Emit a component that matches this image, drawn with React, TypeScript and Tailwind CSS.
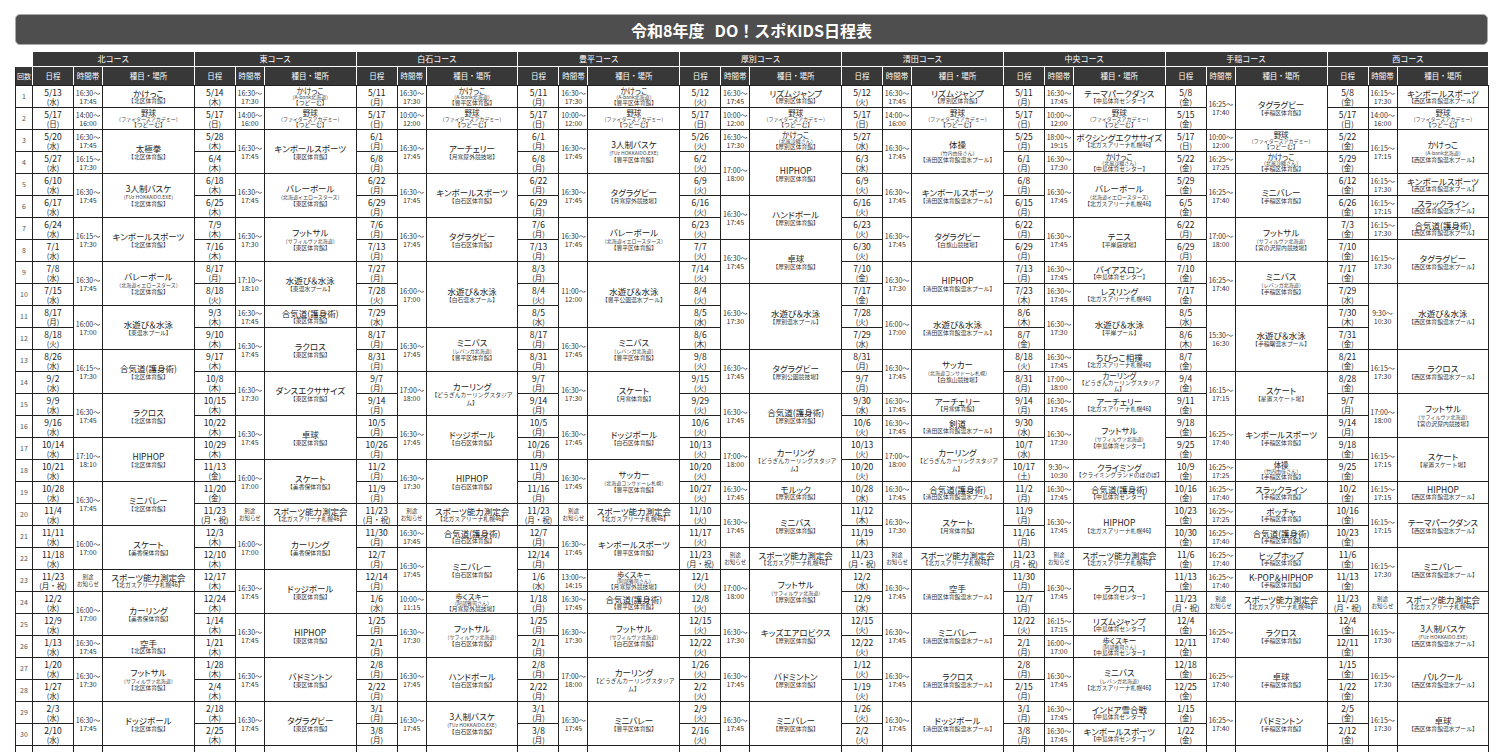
import React from "react";

type TimeBlock = { span: number; a: string; b: string; note?: boolean };
type EventBlock = { span: number; name: string; place: string; sub?: string };

const YAKYU = "野球|つどーむ|ファイターズアカデミー";
const SOKUTEI = "スポーツ能力測定会|北ガスアリーナ札幌46";

const RAW = [
  {
    name: "北コース",
    dates:
      "5/13水 5/17日 5/20水 5/27水 6/10水 6/17水 6/24水 7/1水 7/8水 7/15水 8/17月 8/18火 8/26水 9/2水 9/9水 9/16水 10/14水 10/21水 10/28水 11/4水 11/11水 11/18水 11/23月・祝 12/2水 12/9水 1/13水 1/20水 1/27水 2/3水 2/10水",
    times:
      "16:30-17:45 14:00-16:00 16:30-17:45 16:15-17:30 2*16:30-17:45 2*16:15-17:30 2*16:30-17:45 2*16:00-17:00 2*16:15-17:30 2*16:30-17:45 2*17:10-18:10 2*16:30-17:45 2*16:00-17:00 B 2*16:00-17:00 16:30-17:45 2*16:30-17:30 2*16:30-17:45",
    events: [
      "かけっこ|北区体育館",
      YAKYU,
      "2*太極拳|北区体育館",
      "2*3人制バスケ|北区体育館|FUz HOKKAIDO.EXE",
      "2*キンボールスポーツ|北区体育館",
      "2*バレーボール|北区体育館|北海道イエロースターズ",
      "2*水遊び＆水泳|東温水プール",
      "2*合気道(護身術)|北区体育館",
      "2*ラクロス|北区体育館",
      "2*HIPHOP|北区体育館",
      "2*ミニバレー|北区体育館",
      "2*スケート|美香保体育館",
      SOKUTEI,
      "2*カーリング|美香保体育館",
      "空手|北区体育館",
      "2*フットサル|北区体育館|サフィルヴァ北海道",
      "2*ドッジボール|北区体育館",
    ],
  },
  {
    name: "東コース",
    dates:
      "5/14木 5/17日 5/28木 6/4木 6/18木 6/25木 7/9木 7/16木 8/17月 8/18火 9/3木 9/10木 9/17木 10/8木 10/15木 10/22木 10/29木 11/13金 11/20金 11/23月・祝 12/3木 12/10木 12/17木 12/24木 1/14木 1/21木 1/28木 2/4木 2/18木 2/25木",
    times:
      "16:30-17:30 14:00-16:00 2*16:30-17:45 2*16:30-17:45 2*16:30-17:30 2*17:10-18:10 16:30-17:45 2*16:30-17:45 2*16:30-17:30 2*16:30-17:45 2*16:00-17:00 B 2*16:00-17:00 2*16:30-17:45 2*16:30-17:45 2*16:30-17:45 2*16:30-17:45",
    events: [
      "かけっこ|つどーむ|A-bank北海道",
      YAKYU,
      "2*キンボールスポーツ|東区体育館",
      "2*バレーボール|東区体育館|北海道イエロースターズ",
      "2*フットサル|東区体育館|サフィルヴァ北海道",
      "2*水遊び＆水泳|東温水プール",
      "合気道(護身術)|東区体育館",
      "2*ラクロス|東区体育館",
      "2*ダンスエクササイズ|東区体育館",
      "2*卓球|東区体育館",
      "2*スケート|美香保体育館",
      SOKUTEI,
      "2*カーリング|美香保体育館",
      "2*ドッジボール|東区体育館",
      "2*HIPHOP|東区体育館",
      "2*バドミントン|東区体育館",
      "2*タグラグビー|東区体育館",
    ],
  },
  {
    name: "白石コース",
    dates:
      "5/11月 5/17日 6/1月 6/8月 6/22月 6/29月 7/6月 7/13月 7/27月 7/28火 7/29水 8/17月 8/31月 9/7月 9/14月 10/5月 10/26月 11/2月 11/9月 11/23月・祝 11/30月 12/7月 12/14月 1/6水 1/25月 2/1月 2/8月 2/22月 3/1月 3/8月",
    times:
      "16:30-17:30 10:00-12:00 2*16:30-17:45 2*16:30-17:45 2*16:30-17:45 3*16:00-17:00 2*16:30-17:45 2*17:00-18:00 2*16:30-17:45 2*16:30-17:30 B 16:30-17:45 2*16:30-17:45 10:00-11:15 2*16:30-17:30 2*16:30-17:45 2*16:30-17:45",
    events: [
      "かけっこ|豊平区体育館|A-bank北海道",
      YAKYU,
      "2*アーチェリー|月寒屋外競技場",
      "2*キンボールスポーツ|白石区体育館",
      "2*タグラグビー|白石区体育館",
      "3*水遊び＆水泳|白石温水プール",
      "2*ミニバス|豊平区体育館|レバンガ北海道",
      "2*カーリング|どうぎんカーリングスタジアム",
      "2*ドッジボール|白石区体育館",
      "2*HIPHOP|白石区体育館",
      SOKUTEI,
      "合気道(護身術)|白石区体育館",
      "2*ミニバレー|白石区体育館",
      "歩くスキー|月寒屋外競技場|阿部雅司さん",
      "2*フットサル|白石区体育館|サフィルヴァ北海道",
      "2*ハンドボール|白石区体育館",
      "2*3人制バスケ|白石区体育館|FUz HOKKAIDO.EXE",
    ],
  },
  {
    name: "豊平コース",
    dates:
      "5/11月 5/17日 6/1月 6/8月 6/22月 6/29月 7/6月 7/13月 8/3月 8/4火 8/5水 8/17月 8/31月 9/7月 9/14月 10/5月 10/26月 11/9月 11/16月 11/23月・祝 12/7月 12/14月 1/6水 1/18月 1/25月 2/1月 2/8月 2/22月 3/1月 3/8月",
    times:
      "16:30-17:30 10:00-12:00 2*16:30-17:45 2*16:30-17:45 2*16:30-17:45 3*11:00-12:00 2*16:30-17:45 2*16:30-17:30 2*16:30-17:45 2*16:30-17:45 B 2*16:30-17:45 13:00-14:15 16:30-17:45 2*16:30-17:30 2*17:00-18:00 2*16:30-17:45",
    events: [
      "かけっこ|豊平区体育館|A-bank北海道",
      YAKYU,
      "2*3人制バスケ|豊平区体育館|FUz HOKKAIDO.EXE",
      "2*タグラグビー|月寒屋外競技場",
      "2*バレーボール|豊平区体育館|北海道イエロースターズ",
      "3*水遊び＆水泳|豊平公園温水プール",
      "2*ミニバス|豊平区体育館|レバンガ北海道",
      "2*スケート|月寒体育館",
      "2*ドッジボール|白石区体育館",
      "2*サッカー|豊平区体育館|北海道コンサドーレ札幌",
      SOKUTEI,
      "2*キンボールスポーツ|豊平区体育館",
      "歩くスキー|月寒屋外競技場|阿部雅司さん",
      "合気道(護身術)|豊平区体育館",
      "2*フットサル|白石区体育館|サフィルヴァ北海道",
      "2*カーリング|どうぎんカーリングスタジアム",
      "2*ミニバレー|豊平区体育館",
    ],
  },
  {
    name: "厚別コース",
    dates:
      "5/12火 5/17日 5/26火 6/2火 6/9火 6/16火 6/23火 7/7火 7/14火 8/4火 8/5水 8/6木 9/8火 9/15火 9/29火 10/6火 10/13火 10/20火 10/27火 11/10火 11/17火 11/23月・祝 12/1火 12/8火 12/15火 12/22火 1/26火 2/2火 2/9火 2/16火",
    times:
      "16:30-17:45 10:00-12:00 16:30-17:30 2*17:00-18:00 2*16:30-17:45 2*16:30-17:45 3*16:30-17:30 2*16:30-17:45 2*16:30-17:45 2*17:00-18:00 16:30-17:45 2*16:30-17:45 B 2*17:00-18:00 2*16:30-17:30 2*16:30-17:45 2*16:30-17:45",
    events: [
      "リズムジャンプ|厚別区体育館",
      YAKYU,
      "かけっこ|厚別区体育館|北風沙織さん",
      "2*HIPHOP|厚別区体育館",
      "2*ハンドボール|厚別区体育館",
      "2*卓球|厚別区体育館",
      "3*水遊び＆水泳|厚別温水プール",
      "2*タグラグビー|厚別公園競技場",
      "2*合気道(護身術)|厚別区体育館",
      "2*カーリング|どうぎんカーリングスタジアム",
      "モルック|厚別区体育館",
      "2*ミニバス|厚別区体育館",
      SOKUTEI,
      "2*フットサル|厚別区体育館|サフィルヴァ北海道",
      "2*キッズエアロビクス|厚別区体育館",
      "2*バドミントン|厚別区体育館",
      "2*ミニバレー|厚別区体育館",
    ],
  },
  {
    name: "清田コース",
    dates:
      "5/12火 5/17日 5/27水 6/3水 6/9火 6/16火 6/23火 6/30火 7/10金 7/17金 7/28火 7/29水 8/31月 9/7月 9/30水 10/6火 10/13火 10/20火 10/28水 11/12木 11/19木 11/23月・祝 12/2水 12/9水 12/15火 12/22火 1/12火 1/19火 1/26火 2/2火",
    times:
      "16:30-17:45 14:00-16:00 2*16:30-17:45 2*16:30-17:45 2*16:30-17:45 2*16:30-17:30 2*16:00-17:00 2*16:30-17:45 16:30-17:45 16:30-17:45 2*17:00-18:00 16:30-17:45 2*16:30-17:30 B 2*16:30-17:45 2*16:30-17:45 2*16:30-17:45 2*16:30-17:45",
    events: [
      "リズムジャンプ|厚別区体育館",
      YAKYU,
      "2*体操|清田区体育館温水プール|竹内由佳さん",
      "2*キンボールスポーツ|清田区体育館温水プール",
      "2*タグラグビー|白旗山競技場",
      "2*HIPHOP|清田区体育館温水プール",
      "2*水遊び＆水泳|清田区体育館温水プール",
      "2*サッカー|白旗山競技場|北海道コンサドーレ札幌",
      "アーチェリー|月寒体育館",
      "剣道|清田区体育館温水プール",
      "2*カーリング|どうぎんカーリングスタジアム",
      "合気道(護身術)|清田区体育館温水プール",
      "2*スケート|月寒体育館",
      SOKUTEI,
      "2*空手|清田区体育館温水プール",
      "2*ミニバレー|清田区体育館温水プール",
      "2*ラクロス|清田区体育館温水プール",
      "2*ドッジボール|清田区体育館温水プール",
    ],
  },
  {
    name: "中央コース",
    dates:
      "5/11月 5/17日 5/25月 6/1月 6/8月 6/15月 6/22月 6/29月 7/13月 7/23木 8/6木 8/7金 8/18火 8/31月 9/14月 9/30水 10/7水 10/17土 11/2月 11/9月 11/16月 11/23月・祝 11/30月 12/7月 12/22火 2/1月 2/8月 2/15月 3/1月 3/8月",
    times:
      "16:30-17:45 10:00-12:00 18:00-19:15 16:30-17:30 2*16:30-17:45 2*16:30-17:45 16:30-17:45 16:30-17:45 2*16:30-17:30 16:30-17:45 17:00-18:00 16:30-17:45 2*16:30-17:30 9:30-10:30 16:30-17:45 2*16:30-17:45 B 2*16:30-17:45 16:15-17:15 16:00-17:00 2*16:30-17:45 16:30-17:45 16:30-17:45",
    events: [
      "テーマパークダンス|中島体育センター",
      YAKYU,
      "ボクシングエクササイズ|北ガスアリーナ札幌46",
      "かけっこ|中島体育センター|北風沙織さん",
      "2*バレーボール|北ガスアリーナ札幌46|北海道イエロースターズ",
      "2*テニス|平岸庭球場",
      "バイアスロン|中島体育センター",
      "レスリング|北ガスアリーナ札幌46",
      "2*水遊び＆水泳|平岸プール",
      "ちびっこ相撲|北ガスアリーナ札幌46",
      "カーリング|どうぎんカーリングスタジアム",
      "アーチェリー|北ガスアリーナ札幌46",
      "2*フットサル|中島体育センター|サフィルヴァ北海道",
      "クライミング|クライミングランドのぼのぼ",
      "合気道(護身術)|中島体育センター",
      "2*HIPHOP|北ガスアリーナ札幌46",
      SOKUTEI,
      "2*ラクロス|中島体育センター",
      "リズムジャンプ|中島体育センター",
      "歩くスキー|中島体育センター|阿部雅司さん",
      "2*ミニバス|北ガスアリーナ札幌46|レバンガ北海道",
      "インドア雪合戦|中島体育センター",
      "キンボールスポーツ|中島体育センター",
    ],
  },
  {
    name: "手稲コース",
    dates:
      "5/8金 5/15金 5/17日 5/22金 5/29金 6/5金 6/22月 6/29月 7/10金 7/17金 8/5水 8/6木 8/7金 9/4金 9/11金 9/18金 9/25金 10/9金 10/16金 10/23金 10/30金 11/6金 11/13金 11/23月・祝 12/4金 12/11金 12/18金 12/25金 1/15金 1/22金",
    times:
      "2*16:25-17:40 10:00-12:00 16:25-17:25 2*16:25-17:40 2*17:00-18:00 2*16:25-17:40 3*15:30-16:30 2*16:15-17:15 2*16:25-17:40 16:25-17:25 16:25-17:40 16:25-17:25 16:25-17:40 16:25-17:40 16:25-17:40 B 2*16:25-17:40 2*16:25-17:40 2*16:25-17:40",
    events: [
      "2*タグラグビー|手稲区体育館",
      YAKYU,
      "かけっこ|手稲区体育館|北風沙織さん",
      "2*ミニバレー|手稲区体育館",
      "2*フットサル|宮の沢屋内競技場|サフィルヴァ北海道",
      "2*ミニバス|手稲区体育館|レバンガ北海道",
      "3*水遊び＆水泳|手稲曙温水プール",
      "2*スケート|星置スケート場",
      "2*キンボールスポーツ|手稲区体育館",
      "体操|手稲区体育館|竹内由佳さん",
      "スラックライン|手稲区体育館",
      "ボッチャ|手稲区体育館",
      "合気道(護身術)|手稲区体育館",
      "ヒップホップ|手稲区体育館",
      "K-POP＆HIPHOP|手稲区体育館",
      SOKUTEI,
      "2*ラクロス|手稲区体育館",
      "2*卓球|手稲区体育館",
      "2*バドミントン|手稲区体育館",
    ],
  },
  {
    name: "西コース",
    dates:
      "5/8金 5/17日 5/22金 5/29金 6/12金 6/26金 7/3金 7/10金 7/17金 7/29水 7/30木 7/31金 8/21金 8/28金 9/7月 9/14月 9/18金 9/25金 10/2金 10/16金 10/23金 11/6金 11/13金 11/23月・祝 12/4金 12/11金 1/15金 1/22金 2/5金 2/12金",
    times:
      "16:15-17:30 14:00-16:00 2*16:15-17:15 16:15-17:30 16:15-17:15 16:15-17:30 2*16:15-17:30 3*9:30-10:30 2*16:15-17:30 2*17:00-18:00 2*16:15-17:15 16:15-17:15 2*16:15-17:15 2*16:15-17:30 B 2*16:15-17:30 2*16:15-17:30 2*16:15-17:30",
    events: [
      "キンボールスポーツ|西区体育館温水プール",
      YAKYU,
      "2*かけっこ|西区体育館温水プール|A-bank北海道",
      "キンボールスポーツ|西区体育館温水プール",
      "スラックライン|西区体育館温水プール",
      "合気道(護身術)|西区体育館温水プール",
      "2*タグラグビー|西区体育館温水プール",
      "3*水遊び＆水泳|西区体育館温水プール",
      "2*ラクロス|西区体育館温水プール",
      "2*フットサル|宮の沢屋内競技場|サフィルヴァ北海道",
      "2*スケート|星置スケート場",
      "HIPHOP|西区体育館温水プール",
      "2*テーマパークダンス|西区体育館温水プール",
      "2*ミニバレー|西区体育館温水プール",
      SOKUTEI,
      "2*3人制バスケ|西区体育館温水プール|FUz HOKKAIDO.EXE",
      "2*パルクール|西区体育館温水プール",
      "2*卓球|西区体育館温水プール",
    ],
  },
];

function splitSpan(s: string): [number, string] {
  const i = s.indexOf("*");
  if (i > 0 && i < 3) return [Number(s.slice(0, i)), s.slice(i + 1)];
  return [1, s];
}

function parseTimes(s: string): TimeBlock[] {
  return s.split(" ").map((raw) => {
    const [span, t] = splitSpan(raw);
    if (t === "B") return { span, a: "別途", b: "お知らせ", note: true };
    const [a, b] = t.split("-");
    return { span, a: a + "～", b };
  });
}

function parseEvent(s: string): EventBlock {
  const [span, t] = splitSpan(s);
  const [name, place, sub] = t.split("|");
  return { span, name, place, sub };
}

function startMap<T extends { span: number }>(blocks: T[]) {
  const m: Record<number, T> = {};
  let r = 0;
  for (const b of blocks) {
    m[r] = b;
    r += b.span;
  }
  return m;
}

const courses = RAW.map((c) => ({
  name: c.name,
  dates: c.dates.split(" ").map((d) => {
    const m = d.match(/^([\d/]+)(.+)$/);
    return { day: m ? m[1] : d, wd: m ? m[2] : "" };
  }),
  tm: startMap(parseTimes(c.times)),
  ev: startMap(c.events.map(parseEvent)),
}));

const cell = "border border-[#222] p-0 text-center align-middle";
const head = "bg-[#383838] text-white font-normal border border-white p-0";

function EventCell({ e }: { e: EventBlock }) {
  // one-row cells with three lines need tighter lines to stay 22px tall
  const tight = e.span === 1 && (e.sub || e.place.length > 13);
  return (
    <td rowSpan={e.span} className={`${cell} px-[1px]`}>
      <div
        className={`text-[#222] [font-feature-settings:'palt'] ${
          tight ? "text-[7.5px] leading-[7.5px]" : e.span === 1 ? "text-[8.5px] leading-[9px]" : "text-[8.5px] leading-[10px]"
        }`}
      >
        {e.name}
      </div>
      {e.sub && (
        <div className={`text-[5px] text-[#444] ${tight ? "leading-[6px]" : "leading-[7px]"}`}>（{e.sub}）</div>
      )}
      <div className={`text-[5.8px] text-[#333] ${tight || e.span === 1 ? "leading-[6.5px]" : "leading-[7.5px]"}`}>
        【{e.place}】
      </div>
    </td>
  );
}

export default function App() {
  return (
    <div className="h-[752px] w-[1503px] overflow-hidden bg-white pt-[14px] font-['Noto_Sans_CJK_JP','Noto_Sans',sans-serif]">
      {/* title */}
      <div className="mx-[15px] flex h-[31px] items-center justify-center rounded-[5px] border border-[#a9a9a9] bg-[#4e4e4e] text-[16px] font-bold text-white">
        令和8年度<span className="ml-[10px]">DO！スポKIDS日程表</span>
      </div>

      <table className="ml-[15px] mt-[6px] w-[1473px] table-fixed border-collapse">
        <colgroup>
          <col className="w-[17px]" />
          {courses.map((c) => (
            <React.Fragment key={c.name}>
              <col className="w-[41px]" />
              <col className="w-[29px]" />
              <col className="w-[91.8px]" />
            </React.Fragment>
          ))}
        </colgroup>
        <thead>
          <tr className="h-[15px]">
            <th className="border-0 p-0"></th>
            {courses.map((c) => (
              <th key={c.name} colSpan={3} className={`${head} text-[8px]`}>
                {c.name}
              </th>
            ))}
          </tr>
          <tr className="h-[19px]">
            <th className={`${head} border-b-[#222] border-l-[#222] text-[7px]`}>回数</th>
            {courses.map((c) => (
              <React.Fragment key={c.name}>
                <th className={`${head} border-b-[#222] text-[7.5px]`}>日程</th>
                <th className={`${head} border-b-[#222] text-[7.5px]`}>時間帯</th>
                <th className={`${head} border-b-[#222] text-[7.5px]`}>種目・場所</th>
              </React.Fragment>
            ))}
          </tr>
        </thead>
        <tbody>
          {Array.from({ length: 30 }, (_, r) => (
            <tr key={r} className="h-[22px]">
              <td className={`${cell} text-[7px] text-[#555]`}>{r + 1}</td>
              {courses.map((c) => {
                const d = c.dates[r];
                const t = c.tm[r];
                const e = c.ev[r];
                return (
                  <React.Fragment key={c.name}>
                    <td className={`${cell} text-[#222]`}>
                      <div className="text-[8.5px] leading-[9px]">{d.day}</div>
                      <div className="text-[7.5px] leading-[9px]">({d.wd})</div>
                    </td>
                    {t && (
                      <td rowSpan={t.span} className={`${cell} text-[#333]`}>
                        {t.note ? (
                          <>
                            <div className="text-[5.5px] leading-[7px]">{t.a}</div>
                            <div className="text-[5.5px] leading-[7px]">{t.b}</div>
                          </>
                        ) : (
                          <>
                            <div className="text-[7px] leading-[8px]">{t.a}</div>
                            <div className="text-[7px] leading-[8px]">{t.b}</div>
                          </>
                        )}
                      </td>
                    )}
                    {e && <EventCell e={e} />}
                  </React.Fragment>
                );
              })}
            </tr>
          ))}
          <tr className="h-[22px]">
            <td className={cell}></td>
            {courses.map((c) => (
              <React.Fragment key={c.name}>
                <td className={cell}></td>
                <td className={cell}></td>
                <td className={cell}></td>
              </React.Fragment>
            ))}
          </tr>
        </tbody>
      </table>
    </div>
  );
}
